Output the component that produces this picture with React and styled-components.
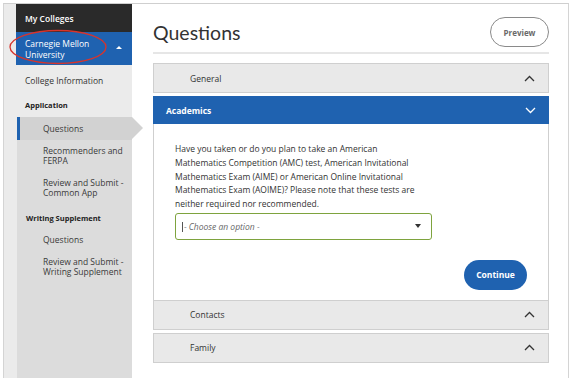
import React from "react";
import styled, { createGlobalStyle } from "styled-components";

const Global = createGlobalStyle`
  html, body { margin: 0; padding: 0; background: #fff; }
  body { font-family: "Open Sans", "Liberation Sans", sans-serif; color: #333; }
  * { box-sizing: border-box; }
`;

const Frame = styled.div`
  margin: 3px 3px 0 3px;
  height: 375px;
  border-top: 1px solid #cfcfcf;
  border-left: 1px solid #d4d4d4;
  border-right: 1px solid #d4d4d4;
  display: flex;
  overflow: hidden;
`;

const Sidebar = styled.nav`
  width: 128px;
  flex: none;
  background: #ebebeb;
  padding-left: 12px;
  display: flex;
  flex-direction: column;
`;

const DarkBar = styled.div`
  height: 28px;
  background: #2a2a2a;
  color: #fff;
  font-size: 8.5px;
  font-weight: 600;
  display: flex;
  align-items: center;
  padding-left: 9px;
`;

const BlueBar = styled.div`
  position: relative;
  height: 33px;
  background: #1f62b0;
  color: #fff;
  font-size: 8.5px;
  line-height: 11px;
  display: flex;
  align-items: center;
  justify-content: space-between;
  padding: 0 10px 0 9px;
`;

const Caret = styled.span`
  width: 0;
  height: 0;
  border-left: 3px solid transparent;
  border-right: 3px solid transparent;
  border-bottom: 3px solid #fff;
  margin-top: -2px;
`;

const Circle = styled.svg`
  position: absolute;
  left: -7px;
  top: -4px;
  pointer-events: none;
`;

const PlainItem = styled.div`
  height: 30px;
  display: flex;
  align-items: center;
  padding-left: 9px;
  font-size: 8.5px;
  color: #333;
`;

const GroupTitle = styled.div`
  font-size: 7.5px;
  font-weight: 700;
  color: #222;
  line-height: 10px;
  padding: ${(p) => p.$pad || "5px 0 6px 9px"};
`;

const SubList = styled.div`
  flex: 1;
  background: #dcdcdc;
  margin-left: 1px;
  display: flex;
  flex-direction: column;
`;

const SubItem = styled.div`
  position: relative;
  padding: ${(p) => (p.$two ? "6px 6px 6px 23px" : "0 6px 0 23px")};
  height: ${(p) => (p.$two ? "auto" : "23px")};
  display: flex;
  align-items: center;
  font-size: 8.5px;
  line-height: 10px;
  color: #3a3a3a;
  background: ${(p) => (p.$active ? "#d2d2d2" : "transparent")};
  border-left: 3px solid ${(p) => (p.$active ? "#1f62b0" : "transparent")};
  ${(p) =>
    p.$active &&
    `&::after {
      content: "";
      position: absolute;
      right: -11px;
      top: 0;
      border-top: 11.5px solid transparent;
      border-bottom: 11.5px solid transparent;
      border-left: 11px solid #d2d2d2;
    }`}
`;

const Main = styled.main`
  flex: 1;
  background: #fff;
  padding: 13px 19px 0 21px;
  display: flex;
  flex-direction: column;
`;

const Header = styled.div`
  display: flex;
  align-items: center;
  justify-content: space-between;
  padding-bottom: 5px;
  border-bottom: 2px solid #e6e6e6;
`;

const Title = styled.h1`
  margin: 0;
  font-family: Lato, "Open Sans", sans-serif;
  font-size: 19.5px;
  font-weight: 400;
  color: #333;
`;

const OutlineButton = styled.button`
  width: 59px;
  height: 30px;
  border-radius: 15px;
  border: 1.5px solid #8a8a8a;
  background: #fff;
  color: #6a6a6a;
  font-family: inherit;
  font-size: 8px;
  font-weight: 700;
`;

const Accordion = styled.div`
  margin-top: 9px;
  display: flex;
  flex-direction: column;
  gap: 3px;
`;

const Section = styled.div`
  border: 1px solid #cfcfcf;
  border-top: ${(p) => (p.$open ? "none" : "1px solid #cfcfcf")};
  margin-bottom: ${(p) => (p.$open ? "-4px" : "0")};
`;

const SectionHead = styled.div`
  height: 28px;
  background: ${(p) => (p.$open ? "#1f62b0" : "#e9e9e9")};
  color: ${(p) => (p.$open ? "#fff" : "#333")};
  font-size: 8.5px;
  font-weight: ${(p) => (p.$open ? 700 : 400)};
  display: flex;
  align-items: center;
  justify-content: space-between;
  padding: 0 13px 0 ${(p) => (p.$open ? "13px" : "36px")};
  margin: ${(p) => (p.$open ? "0 -1px" : "0")};
`;

const SectionBody = styled.div`
  padding: 18px 21px 10px 21px;
  display: flex;
  flex-direction: column;
`;

const Question = styled.p`
  margin: 0;
  width: 240px;
  font-size: 8.5px;
  line-height: 13.8px;
  color: #333;
`;

const Select = styled.div`
  margin-top: 2px;
  width: 257px;
  height: 27px;
  border: 1.5px solid #7ea33e;
  border-radius: 3px;
  display: flex;
  align-items: center;
  justify-content: space-between;
  padding: 0 10px 0 6px;
  font-size: 8.5px;
  font-style: italic;
  color: #666;
`;

const Cursor = styled.span`
  display: inline-block;
  width: 1px;
  height: 10px;
  background: #555;
  margin-right: 1px;
  vertical-align: -2px;
`;

const DownTri = styled.span`
  width: 0;
  height: 0;
  border-left: 3.5px solid transparent;
  border-right: 3.5px solid transparent;
  border-top: 4px solid #333;
`;

const Actions = styled.div`
  display: flex;
  justify-content: flex-end;
  margin-top: 20px;
`;

const PrimaryButton = styled.button`
  width: 63px;
  height: 30px;
  border-radius: 15px;
  border: none;
  background: #1f62b0;
  color: #fff;
  font-family: inherit;
  font-size: 8.5px;
  font-weight: 700;
`;

const Chevron = ({ up, color }) => (
  <svg width="11" height="7" viewBox="0 0 11 7">
    <path
      d={up ? "M1 6 L5.5 1.5 L10 6" : "M1 1 L5.5 5.5 L10 1"}
      fill="none"
      stroke={color}
      strokeWidth="1.3"
    />
  </svg>
);

export default function App() {
  return (
    <>
      <Global />
      <Frame>
        <Sidebar>
          <DarkBar>My Colleges</DarkBar>
          <BlueBar>
            <span>
              Carnegie Mellon
              <br />
              University
            </span>
            <Caret />
            <Circle width="100" height="38" viewBox="0 0 100 38">
              <ellipse cx="49" cy="19" rx="48" ry="16.5" fill="none" stroke="#d8342c" strokeWidth="1.3" />
            </Circle>
          </BlueBar>
          <PlainItem>College Information</PlainItem>
          <GroupTitle $pad="5px 0 7px 9px">Application</GroupTitle>
          <SubList>
            <SubItem $active>Questions</SubItem>
            <SubItem $two>
              Recommenders and
              <br />
              FERPA
            </SubItem>
            <SubItem $two>
              Review and Submit -
              <br />
              Common App
            </SubItem>
            <GroupTitle $pad="9px 0 5px 9px">Writing Supplement</GroupTitle>
            <SubItem>Questions</SubItem>
            <SubItem $two>
              Review and Submit -
              <br />
              Writing Supplement
            </SubItem>
          </SubList>
        </Sidebar>
        <Main>
          <Header>
            <Title>Questions</Title>
            <OutlineButton>Preview</OutlineButton>
          </Header>
          <Accordion>
            <Section>
              <SectionHead>
                General
                <Chevron up color="#333" />
              </SectionHead>
            </Section>
            <Section $open>
              <SectionHead $open>
                Academics
                <Chevron color="#fff" />
              </SectionHead>
              <SectionBody>
                <Question>
                  Have you taken or do you plan to take an American Mathematics Competition (AMC) test, American
                  Invitational Mathematics Exam (AIME) or American Online Invitational Mathematics Exam (AOIME)?
                  Please note that these tests are neither required nor recommended.
                </Question>
                <Select>
                  <span>
                    <Cursor />- Choose an option -
                  </span>
                  <DownTri />
                </Select>
                <Actions>
                  <PrimaryButton>Continue</PrimaryButton>
                </Actions>
              </SectionBody>
            </Section>
            <Section>
              <SectionHead>
                Contacts
                <Chevron up color="#333" />
              </SectionHead>
            </Section>
            <Section>
              <SectionHead>
                Family
                <Chevron up color="#333" />
              </SectionHead>
            </Section>
          </Accordion>
        </Main>
      </Frame>
    </>
  );
}
